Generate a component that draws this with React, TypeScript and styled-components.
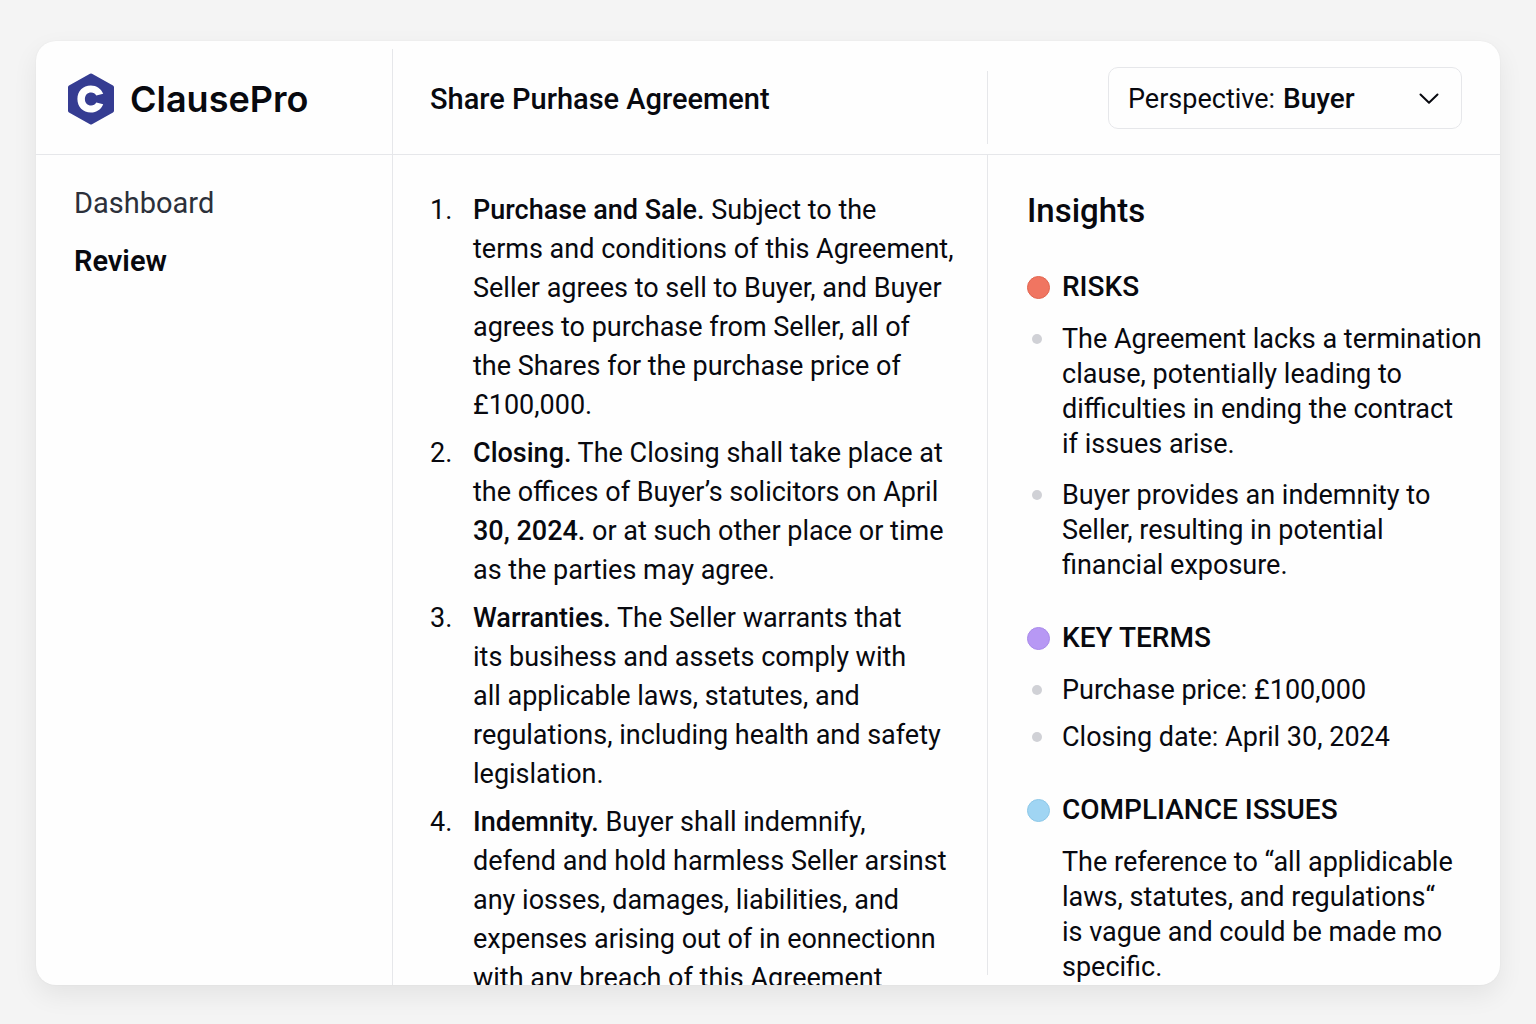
import React, { useState } from "react";
import styled, { createGlobalStyle } from "styled-components";

const line = "#e6e7ea";
const ink = "#08090f";

const GlobalStyle = createGlobalStyle`
  *, *::before, *::after { box-sizing: border-box; }
  body {
    margin: 0;
    background: #f4f4f4;
    color: ${ink};
    font-family: Roboto, "Liberation Sans", sans-serif;
    font-size: 27px;
  }
`;

const Page = styled.div`
  height: 100vh;
  padding: 41px 36px 39px;
`;

const Card = styled.div`
  display: grid;
  grid-template-columns: 356px minmax(0, 1fr) 513px;
  grid-template-rows: 114px minmax(0, 1fr);
  height: 100%;
  overflow: hidden;
  background: #fefefe;
  border-radius: 20px;
  box-shadow: 0 0 2px rgba(0, 0, 0, 0.05), 0 10px 26px rgba(0, 0, 0, 0.07);
`;

const HeaderCell = styled.div`
  display: flex;
  align-items: center;
  border-bottom: 1px solid ${line};
`;

const Brand = styled(HeaderCell)`
  gap: 15px;
  padding: 3px 0 0 31px;
`;

const BrandName = styled.span`
  font-family: Inter, Roboto, sans-serif;
  font-size: 36px;
  line-height: 44px;
  font-weight: 600;
`;

const TitleBar = styled(HeaderCell)`
  gap: 37px;
`;

const Title = styled.h1`
  margin: 0;
  padding-top: 2px;
  font-size: 29px;
  line-height: 36px;
  font-weight: 500;
`;

const TallDivider = styled.span`
  width: 1px;
  height: 105px;
  align-self: flex-end;
  background: ${line};
`;

const ShortDivider = styled.span`
  width: 1px;
  height: 73px;
  margin-top: 20px;
  background: ${line};
`;

const Tools = styled(HeaderCell)`
  justify-content: space-between;
  padding-right: 38px;
`;

const Picker = styled.div`
  position: relative;
  display: flex;
  align-items: center;
  width: 354px;
  height: 62px;
  padding: 2px 0 0 19px;
  border: 1px solid ${line};
  border-radius: 10px;
`;

const PickerLabel = styled.label`
  line-height: 36px;
`;

const PickerSelect = styled.select`
  flex: 1;
  height: 100%;
  padding: 0 56px 0 8px;
  border: 0;
  background: transparent;
  color: inherit;
  font: inherit;
  font-size: 28px;
  font-weight: 500;
  appearance: none;
  cursor: pointer;
`;

const Chevron = styled.svg`
  position: absolute;
  right: 22px;
  pointer-events: none;
`;

const Sidebar = styled.nav`
  display: flex;
  flex-direction: column;
  gap: 22px;
  padding: 30px 38px;
`;

const NavLink = styled.a<{ $active?: boolean }>`
  color: ${({ $active }) => ($active ? ink : "#2c303a")};
  font-size: 29px;
  line-height: 36px;
  font-weight: ${({ $active }) => ($active ? 600 : 400)};
  text-decoration: none;
`;

const Document = styled.main`
  overflow: hidden;
  padding: 36px 0 0 37px;
  border-left: 1px solid ${line};
`;

const Clauses = styled.ol`
  display: flex;
  flex-direction: column;
  gap: 9px;
  margin: 0;
  padding: 0;
  list-style: none;
  counter-reset: clause;
`;

const Clause = styled.li`
  display: grid;
  grid-template-columns: 43px 1fr;
  line-height: 39px;
  white-space: nowrap;
  counter-increment: clause;

  &::before { content: counter(clause) "."; }
`;

const Strong = styled.strong`
  font-weight: 500;
`;

const Insights = styled.aside`
  min-height: 0;
  margin-bottom: 10px;
  padding: 35px 0 0 39px;
  border-left: 1px solid ${line};
`;

const InsightsTitle = styled.h2`
  margin: 0 0 37px;
  font-size: 33px;
  line-height: 42px;
  font-weight: 500;
`;

const Group = styled.section`
  & + & { margin-top: 37px; }
`;

const GroupTitle = styled.h3`
  display: flex;
  align-items: center;
  gap: 12px;
  margin: 0 0 17px;
  font-size: 28px;
  line-height: 36px;
  font-weight: 500;
`;

const Dot = styled.span<{ $fill: string; $edge: string }>`
  width: 23px;
  height: 23px;
  border: 1px solid ${({ $edge }) => $edge};
  border-radius: 50%;
  background: ${({ $fill }) => $fill};
`;

const Points = styled.ul<{ $gap: number }>`
  display: flex;
  flex-direction: column;
  gap: ${({ $gap }) => $gap}px;
  margin: 0;
  padding: 0;
  list-style: none;
`;

const Point = styled.li`
  display: grid;
  grid-template-columns: 35px 1fr;
  line-height: 35px;
  white-space: nowrap;

  &::before {
    content: "";
    width: 10px;
    height: 10px;
    margin: 12px 0 0 5px;
    border-radius: 50%;
    background: #d0d1d6;
  }
`;

const Note = styled.div`
  padding-left: 35px;
  line-height: 35px;
  white-space: nowrap;
`;

function Lines({ of }: { of: React.ReactNode[] }) {
  return (
    <div>
      {of.map((text, i) => (
        <React.Fragment key={i}>
          {i > 0 && <br />}
          {text}
        </React.Fragment>
      ))}
    </div>
  );
}

const clauses: React.ReactNode[][] = [
  [
    <><Strong>Purchase and Sale.</Strong> Subject to the</>,
    "terms and conditions of this Agreement,",
    "Seller agrees to sell to Buyer, and Buyer",
    "agrees to purchase from Seller, all of",
    "the Shares for the purchase price of",
    "£100,000.",
  ],
  [
    <><Strong>Closing.</Strong> The Closing shall take place at</>,
    "the offices of Buyer’s solicitors on April",
    <><Strong>30, 2024.</Strong> or at such other place or time</>,
    "as the parties may agree.",
  ],
  [
    <><Strong>Warranties.</Strong> The Seller warrants that</>,
    "its busihess and assets comply with",
    "all applicable laws, statutes, and",
    "regulations, including health and safety",
    "legislation.",
  ],
  [
    <><Strong>Indemnity.</Strong> Buyer shall indemnify,</>,
    "defend and hold harmless Seller arsinst",
    "any iosses, damages, liabilities, and",
    "expenses arising out of in eonnectionn",
    "with any breach of this Agreement",
  ],
];

export default function App() {
  const [side, setSide] = useState("Buyer");
  return (
    <>
      <GlobalStyle />
      <Page>
        <Card>
          <Brand>
            <svg width="48" height="52" viewBox="0 0 48 52" aria-hidden="true">
              <path
                d="M23 .8a2 2 0 0 1 2 0l21 11.700a2 2 0 0 1 1 1.700v23.600a2 2 0 0 1-1 1.700l-21 11.700a2 2 0 0 1-2 0l-21-11.700a2 2 0 0 1-1-1.700V14.200a2 2 0 0 1 1-1.700z"
                fill="#353c92"
              />
              <path
                d="M36.200 20.800C34.200 15.600 29.500 12.500 23.800 12.500C16 12.500 10.400 18.200 10.400 26C10.400 33.800 16 39.500 23.800 39.500C29.500 39.500 34.200 36.400 36.200 31.200L29.300 29.600C28.200 31.600 26.400 32.600 24.200 32.600C20.400 32.600 17.900 29.900 17.900 26C17.900 22.100 20.400 19.400 24.200 19.400C26.400 19.400 28.200 20.400 29.300 22.400z"
                fill="#fff"
              />
            </svg>
            <BrandName>ClausePro</BrandName>
          </Brand>
          <TitleBar>
            <TallDivider />
            <Title>Share Purhase Agreement</Title>
          </TitleBar>
          <Tools>
            <ShortDivider />
            <Picker>
              <PickerLabel htmlFor="perspective">Perspective:</PickerLabel>
              <PickerSelect id="perspective" value={side} onChange={(e) => setSide(e.target.value)}>
                <option>Buyer</option>
                <option>Seller</option>
              </PickerSelect>
              <Chevron width="20" height="12" viewBox="0 0 20 12" fill="none" aria-hidden="true">
                <path d="M1.500 1.500L10 9.800L18.500 1.500" stroke={ink} strokeWidth="2" strokeLinecap="round" strokeLinejoin="round" />
              </Chevron>
            </Picker>
          </Tools>
          <Sidebar>
            <NavLink href="#dashboard">Dashboard</NavLink>
            <NavLink href="#review" $active aria-current="page">Review</NavLink>
          </Sidebar>
          <Document>
            <Clauses>
              {clauses.map((c, i) => (
                <Clause key={i}><Lines of={c} /></Clause>
              ))}
            </Clauses>
          </Document>
          <Insights>
            <InsightsTitle>Insights</InsightsTitle>
            <Group>
              <GroupTitle><Dot $fill="#f07561" $edge="#e2654f" />RISKS</GroupTitle>
              <Points $gap={16}>
                <Point>
                  <Lines of={["The Agreement lacks a termination", "clause, potentially leading to", "difficulties in ending the contract", "if issues arise."]} />
                </Point>
                <Point>
                  <Lines of={["Buyer provides an indemnity to", "Seller, resulting in potential", "financial exposure."]} />
                </Point>
              </Points>
            </Group>
            <Group>
              <GroupTitle><Dot $fill="#b798f4" $edge="#a98aea" />KEY TERMS</GroupTitle>
              <Points $gap={12}>
                <Point>Purchase price: £100,000</Point>
                <Point>Closing date: April 30, 2024</Point>
              </Points>
            </Group>
            <Group>
              <GroupTitle><Dot $fill="#a0d5f3" $edge="#8dc8e8" />COMPLIANCE ISSUES</GroupTitle>
              <Note>
                <Lines of={["The reference to “all applidicable", "laws, statutes, and regulations“", "is vague and could be made mo", "specific."]} />
              </Note>
            </Group>
          </Insights>
        </Card>
      </Page>
    </>
  );
}
